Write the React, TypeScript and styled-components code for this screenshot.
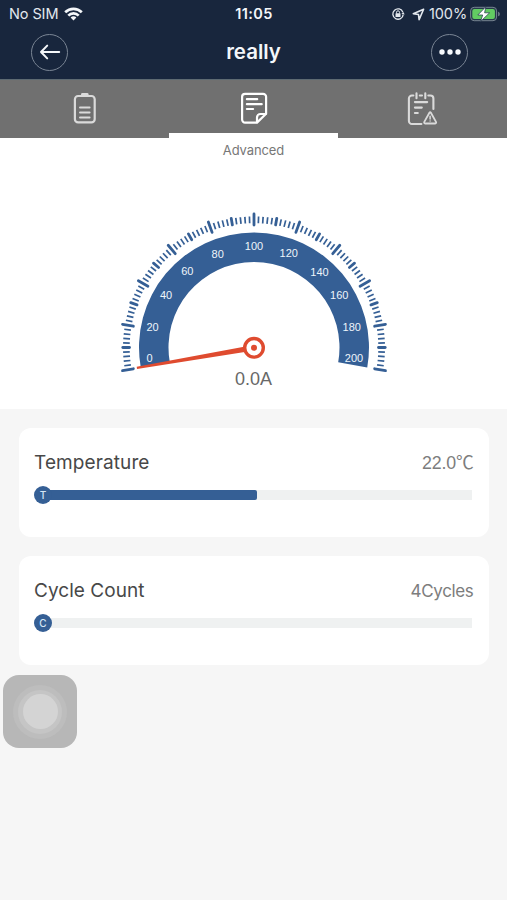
import React from "react";
import styled, { createGlobalStyle } from "styled-components";

const BLUE = "#355f95";
const RED = "#df4b2f";

const GlobalStyle = createGlobalStyle`
  * { box-sizing: border-box; }
  body { margin: 0; background: #f6f6f6; font-family: Inter, "Liberation Sans", sans-serif; }
`;

const Screen = styled.div`
  position: relative;
  width: 507px;
  height: 900px;
  background: #f6f6f6;
  overflow: hidden;
`;

const Header = styled.header`
  height: 79px;
  background: #18263d;
  color: #f4f7fa;
`;

const StatusBar = styled.div`
  display: grid;
  grid-template-columns: 1fr auto 1fr;
  align-items: center;
  height: 28px;
  padding: 0 6px 0 9px;
  font-size: 14.5px;
  line-height: 28px;
`;

const StatusGroup = styled.div<{ $end?: boolean }>`
  display: flex;
  align-items: center;
  justify-content: ${(p) => (p.$end ? "flex-end" : "flex-start")};
  color: #e3e8ee;
`;

const Carrier = styled.span`
  width: 50px;
  margin-right: 5px;
  letter-spacing: -0.1px;
  white-space: nowrap;
`;

const Clock = styled.span`
  margin-right: 2px;
  font-size: 14.5px;
  font-weight: 600;
  letter-spacing: 0.35px;
`;

const StatusIcons = styled.span`
  display: flex;
  align-items: center;
  gap: 7px;
`;

const Percent = styled.span`
  width: 38px;
  margin: 0 3px 0 4px;
  font-size: 14.5px;
  letter-spacing: -0.1px;
  white-space: nowrap;
`;

const NavBar = styled.div`
  display: flex;
  align-items: center;
  justify-content: space-between;
  height: 48px;
  padding: 0 39px 0 31px;
`;

const RoundButton = styled.button`
  display: flex;
  align-items: center;
  justify-content: center;
  width: 37px;
  height: 37px;
  padding: 0;
  border: 1px solid #7a8594;
  border-radius: 50%;
  background: transparent;
`;

const Title = styled.h1`
  margin: 0 0 0 8px;
  font-size: 20.5px;
  font-weight: 600;
  line-height: 24px;
  letter-spacing: 0;
`;

const Tabs = styled.nav`
  display: grid;
  grid-template-columns: repeat(3, 1fr);
  height: 59px;
  border-top: 1px solid #5d6a72;
  background: #707070;
`;

const Tab = styled.div<{ $active?: boolean }>`
  display: flex;
  justify-content: center;
  padding-top: 11px;
  color: ${(p) => (p.$active ? "#ffffff" : "#dadada")};
  border-bottom: ${(p) => (p.$active ? "5px solid #ffffff" : "0")};
`;

const GaugePanel = styled.section`
  display: flex;
  flex-direction: column;
  align-items: center;
  height: 271px;
  background: #ffffff;
`;

const TabLabel = styled.div`
  margin-top: 4px;
  color: #777777;
  font-size: 13px;
  line-height: 16px;
  letter-spacing: -0.1px;
`;

const Dial = styled.svg`
  display: block;
  width: 280px;
  height: 172px;
  margin-top: 47px;
`;

const Reading = styled.div`
  margin-top: -9px;
  color: #686868;
  font: 18px/22px "Liberation Sans", sans-serif;
`;

const Cards = styled.main`
  display: flex;
  flex-direction: column;
  gap: 19px;
  padding: 19px 18.5px 0 19px;
`;

const Card = styled.section`
  height: 109px;
  padding: 23px 15px 0;
  border-radius: 12px;
  background: #ffffff;
`;

const CardHeader = styled.div`
  display: flex;
  align-items: center;
  justify-content: space-between;
  height: 24px;
`;

const CardTitle = styled.h2<{ $tracking: string }>`
  margin: 0;
  color: #484848;
  font-size: 19px;
  font-weight: 400;
  line-height: 24px;
  letter-spacing: ${(p) => p.$tracking};
`;

const CardValue = styled.span<{ $font: string; $size: number; $tracking: string }>`
  color: #7d7d7d;
  font-family: ${(p) => p.$font};
  font-size: ${(p) => p.$size}px;
  line-height: 24px;
  letter-spacing: ${(p) => p.$tracking};
`;

const Meter = styled.div`
  display: flex;
  align-items: center;
  height: 18px;
  margin-top: 11px;
`;

const Knob = styled.div`
  z-index: 1;
  flex: none;
  width: 18px;
  height: 18px;
  border-radius: 50%;
  background: ${BLUE};
  color: #d5e7f6;
  font-size: 10px;
  font-weight: 500;
  line-height: 18px;
  text-align: center;
`;

const Track = styled.div`
  flex: 1;
  height: 10px;
  margin: 0 1.5px 0 -4px;
  background: #eff1f1;
`;

const Fill = styled.div`
  height: 10px;
  border-radius: 0 2px 2px 0;
  background: ${BLUE};
`;

const AssistiveButton = styled.div`
  position: absolute;
  left: 3px;
  top: 675px;
  display: grid;
  place-items: center;
  width: 74px;
  height: 73px;
  border-radius: 16px;
  background: #b7b7b7;
`;

const Ring = styled.div<{ $size: number; $color: string }>`
  display: grid;
  place-items: center;
  width: ${(p) => p.$size}px;
  height: ${(p) => p.$size}px;
  border-radius: 50%;
  background: ${(p) => p.$color};
`;

const WifiIcon = () => (
  <svg width="19" height="14" viewBox="0 0 19 14" fill="none" stroke="#f4f7fa" strokeWidth="2.7">
    <path d="M1.2 5.2a11.8 11.8 0 0 1 16.6 0" />
    <path d="M4.3 8.6a7.4 7.4 0 0 1 10.4 0" />
    <path d="M9.5 13.5 6.6 10.6a4.1 4.1 0 0 1 5.8 0Z" fill="#f4f7fa" stroke="none" />
  </svg>
);

const RotationLockIcon = () => (
  <svg width="14" height="14" viewBox="0 0 14 14" fill="none" stroke="#e3e8ee" strokeWidth="1.3">
    <path d="M11.9 5.2A5.2 5.2 0 1 0 12.2 7.6" />
    <path d="m10.4 7.1 1.9-2.1 1.4 2.5Z" fill="#e3e8ee" stroke="none" />
    <rect x="4.5" y="6.3" width="5" height="3.7" rx="0.5" fill="#e3e8ee" stroke="none" />
    <path d="M5.5 6.5V5.3a1.5 1.5 0 0 1 3 0v1.2" strokeWidth="1" />
  </svg>
);

const LocationIcon = () => (
  <svg width="13" height="13" viewBox="0 0 13 13" fill="none" stroke="#e3e8ee" strokeWidth="1.6" strokeLinejoin="round">
    <path d="M11.6 1.3 1.3 5.8l5.2.7.6 5.1Z" />
  </svg>
);

const ChargeIcon = () => (
  <svg width="31" height="16" viewBox="0 0 31 16">
    <rect x="0.6" y="1.3" width="26" height="13.4" rx="3.6" fill="#26394a" stroke="#778491" />
    <rect x="2.3" y="3" width="22.6" height="10" rx="2" fill="#62cb62" />
    <path d="M28 5.7c1.4.4 1.9 1.2 1.9 2.3s-.5 1.9-1.9 2.3Z" fill="#687582" />
    <path d="M15.8.8 7.8 9h4.9L10.6 15.4 19.6 6.8h-5Z" fill="#fff" stroke="#20344a" strokeWidth="0.7" />
  </svg>
);

const BackIcon = () => (
  <svg width="22" height="18" viewBox="0 0 22 18" fill="none" stroke="#f4f7fa" strokeWidth="2" strokeLinecap="round" strokeLinejoin="round">
    <path d="M20.2 9H2M8.2 2.6 2 9l6.2 6.4" />
  </svg>
);

const MoreIcon = () => (
  <svg width="22" height="6" viewBox="0 0 22 6" fill="#f8fbff">
    <circle cx="3" cy="3" r="2.7" />
    <circle cx="11" cy="3" r="2.7" />
    <circle cx="19" cy="3" r="2.7" />
  </svg>
);

const BatteryTabIcon = () => (
  <svg width="34" height="36" viewBox="0 0 34 36" fill="none" stroke="currentColor" strokeWidth="2.2" strokeLinecap="round">
    <rect x="6.9" y="5" width="19.8" height="26.4" rx="3.2" />
    <path d="M14.4 3.4h4.8" strokeWidth="2.8" />
    <path d="M12 16.6h9.6M12 21.4h9.6M12 26.4h9.6" strokeWidth="2" />
  </svg>
);

const DocumentTabIcon = () => (
  <svg width="34" height="36" viewBox="0 0 34 36" fill="none" stroke="currentColor" strokeWidth="2.2" strokeLinecap="round" strokeLinejoin="round">
    <path d="M20 31.6H8.1a3 3 0 0 1-3-3V5.8a3 3 0 0 1 3-3h18a3 3 0 0 1 3 3v17Z" />
    <path d="M20 31.2v-4.7a3.5 3.5 0 0 1 3.5-3.5h5.3" />
    <path d="M9.9 8.2h10.3M9.9 13.2h14.8M9.9 18h6.2" strokeWidth="2.2" />
  </svg>
);

const AlertTabIcon = () => (
  <svg width="34" height="36" viewBox="0 0 34 36" fill="none" stroke="currentColor" strokeWidth="2.1" strokeLinecap="round" strokeLinejoin="round">
    <path d="M15.4 33H5.9a3 3 0 0 1-3-3V7.5a3 3 0 0 1 3-3h1.5M13.8 4.5h2.2M22.3 4.5h2.1a3 3 0 0 1 3 3V18" />
    <path d="M10.5 2.4v4.9M19.3 2.4v4.9" />
    <path d="M8.9 11.1h12.3M8.9 16.6h6.9M8.9 22h2.9" />
    <path d="M23.4 21.7c.5-.8 1-.8 1.5 0l5.1 9.2c.4.8.1 1.6-.8 1.6H19.1c-.9 0-1.2-.8-.8-1.6Z" strokeWidth="1.8" />
    <path d="M24.1 25.3v2.6M24.1 30v.1" strokeWidth="1.5" />
  </svg>
);

const DIAL_LABELS = [
  { text: "0", x: 149.5, y: 358 },
  { text: "20", x: 152.5, y: 327 },
  { text: "40", x: 166, y: 295.5 },
  { text: "60", x: 187.3, y: 271.5 },
  { text: "80", x: 217.7, y: 254 },
  { text: "100", x: 254, y: 246 },
  { text: "120", x: 288.8, y: 253.5 },
  { text: "140", x: 319.5, y: 272 },
  { text: "160", x: 339.2, y: 295.5 },
  { text: "180", x: 351.8, y: 327.3 },
  { text: "200", x: 354, y: 358 },
];

const CX = 254;
const CY = 347.5;

const polar = (radius: number, degrees: number) => {
  const a = (degrees * Math.PI) / 180;
  return { x: CX + radius * Math.cos(a), y: CY - radius * Math.sin(a) };
};

const tickShape = (index: number) => {
  if (index % 10 === 0) return { inner: 122.5, outer: 133.5, width: 2.8 };
  if (index % 5 === 0) return { inner: 124.5, outer: 131.2, width: 2.8 };
  return { inner: 124.3, outer: 131, width: 1.7 };
};

const Gauge = () => {
  const a = polar(115, 190);
  const b = polar(115, -10);
  const c = polar(85.5, -10);
  const d = polar(85.5, 190);
  return (
    <Dial viewBox="114 205 280 172">
      {Array.from({ length: 101 }, (_, i) => {
        const { inner, outer, width } = tickShape(i);
        const p = polar(inner, 190 - i * 2);
        const q = polar(outer, 190 - i * 2);
        return (
          <line key={i} x1={p.x} y1={p.y} x2={q.x} y2={q.y} stroke={BLUE} strokeWidth={width} strokeLinecap={width > 2 ? "round" : "butt"} />
        );
      })}
      <path
        fill={BLUE}
        d={`M${a.x} ${a.y}A115 115 0 1 1 ${b.x} ${b.y}L${c.x} ${c.y}A85.5 85.5 0 1 0 ${d.x} ${d.y}Z`}
      />
      <g fill="#eef5fb" fontFamily="Liberation Sans, sans-serif" fontSize="11" textAnchor="middle">
        {DIAL_LABELS.map((label) => (
          <text key={label.text} x={label.x} y={label.y + 3.8}>
            {label.text}
          </text>
        ))}
      </g>
      <path d="M136.7 366.8 244 346.8 244.7 352 137 369Z" fill={RED} />
      <circle cx={CX} cy={CY + 0.3} r="9.3" fill="#fff" stroke={RED} strokeWidth="3.4" />
      <circle cx={CX} cy={CY + 0.3} r="3" fill={RED} />
    </Dial>
  );
};

type MetricProps = {
  title: string;
  value: string;
  symbol: string;
  percent: number;
  font: string;
  valueSize: number;
  titleTracking: string;
  valueTracking: string;
};

const Metric = ({ title, value, symbol, percent, font, valueSize, titleTracking, valueTracking }: MetricProps) => (
  <Card>
    <CardHeader>
      <CardTitle $tracking={titleTracking}>{title}</CardTitle>
      <CardValue $font={font} $size={valueSize} $tracking={valueTracking}>{value}</CardValue>
    </CardHeader>
    <Meter>
      <Knob>{symbol}</Knob>
      <Track>
        <Fill style={{ width: `${percent}%` }} />
      </Track>
    </Meter>
  </Card>
);

export default function App() {
  return (
    <Screen>
      <GlobalStyle />
      <Header>
        <StatusBar>
          <StatusGroup>
            <Carrier>No SIM</Carrier>
            <WifiIcon />
          </StatusGroup>
          <Clock>11:05</Clock>
          <StatusGroup $end>
            <StatusIcons>
              <RotationLockIcon />
              <LocationIcon />
            </StatusIcons>
            <Percent>100%</Percent>
            <ChargeIcon />
          </StatusGroup>
        </StatusBar>
        <NavBar>
          <RoundButton aria-label="Back"><BackIcon /></RoundButton>
          <Title>really</Title>
          <RoundButton aria-label="More"><MoreIcon /></RoundButton>
        </NavBar>
      </Header>
      <Tabs>
        <Tab><BatteryTabIcon /></Tab>
        <Tab $active><DocumentTabIcon /></Tab>
        <Tab><AlertTabIcon /></Tab>
      </Tabs>
      <GaugePanel>
        <TabLabel>Advanced</TabLabel>
        <Gauge />
        <Reading>0.0A</Reading>
      </GaugePanel>
      <Cards>
        <Metric title="Temperature" value="22.0℃" symbol="T" percent={49.3} font='"Liberation Sans", "Noto Sans CJK SC", sans-serif' valueSize={17.8} titleTracking="0.1px" valueTracking="-0.2px" />
        <Metric title="Cycle Count" value="4Cycles" symbol="C" percent={0} font="Inter, sans-serif" valueSize={17} titleTracking="0.05px" valueTracking="-0.35px" />
      </Cards>
      <AssistiveButton>
        <Ring $size={54} $color="#bdbdbd">
          <Ring $size={44} $color="#c5c5c5">
            <Ring $size={35} $color="#d4d4d4" />
          </Ring>
        </Ring>
      </AssistiveButton>
    </Screen>
  );
}
